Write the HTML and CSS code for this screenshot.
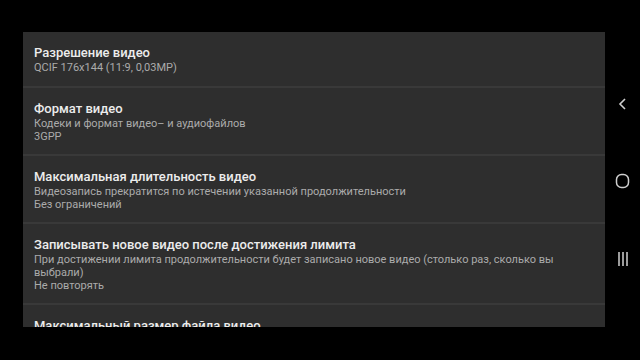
FILE: index.html
```html
<!DOCTYPE html>
<html lang="ru">
<head>
    <meta charset="UTF-8">
    <meta name="viewport" content="width=device-width, initial-scale=1.0">
    <title>Настройки видео</title>
    <link rel="stylesheet" href="styles.css">
</head>
<body>
    <div class="screen">
        <div class="panel">
            <div class="item first">
                <div class="title">Разрешение видео</div>
                <div class="sub">QCIF 176x144 (11:9, 0,03MP)</div>
            </div>
            <div class="item">
                <div class="title">Формат видео</div>
                <div class="sub">Кодеки и формат видео– и аудиофайлов</div>
                <div class="sub">3GPP</div>
            </div>
            <div class="item">
                <div class="title">Максимальная длительность видео</div>
                <div class="sub">Видеозапись прекратится по истечении указанной продолжительности</div>
                <div class="sub">Без ограничений</div>
            </div>
            <div class="item">
                <div class="title">Записывать новое видео после достижения лимита</div>
                <div class="sub">При достижении лимита продолжительности будет записано новое видео (столько раз, сколько вы выбрали)</div>
                <div class="sub">Не повторять</div>
            </div>
            <div class="item">
                <div class="title">Максимальный размер файла видео</div>
                <div class="sub">Без ограничений</div>
            </div>
        </div>

        <!-- системная навигация -->
        <div class="nav">
            <svg width="12" height="14" viewBox="0 0 12 14">
                <path d="M8 2 L3 7 L8 12" fill="none" stroke="#cfcfcf" stroke-width="1.6"/>
            </svg>
            <svg width="16" height="16" viewBox="0 0 16 16">
                <rect x="1.5" y="1.5" width="12" height="13" rx="5" fill="none" stroke="#cfcfcf" stroke-width="1.5"/>
            </svg>
            <svg width="12" height="16" viewBox="0 0 12 16">
                <path d="M2 1 V15 M6 1 V15 M10 1 V15" fill="none" stroke="#cfcfcf" stroke-width="1.5"/>
            </svg>
        </div>
    </div>
</body>
</html>
```

FILE: styles.css
```css
body {
    margin: 0;
    background: #000;
    font-family: Roboto, "Noto Sans", sans-serif;
}

.screen {
    display: flex;
    width: 640px;
    height: 360px;
}

.panel {
    margin: 32px 0 0 23px;
    width: 582px;
    height: 295px;
    overflow: hidden;
    background: #2e2e2e;
}

.item {
    padding: 12px 30px 11px 11px;
    border-bottom: 2px solid #393939;
}

.item.first {
    padding-bottom: 12px;
}

.title {
    color: #ececec;
    font-size: 13px;
    font-weight: 500;
    line-height: 17px;
}

.sub {
    color: #ababab;
    font-size: 11px;
    line-height: 13px;
}

.nav {
    flex: 1;
    display: flex;
    flex-direction: column;
    align-items: center;
    padding-top: 97px;
    gap: 62px;
}
```
